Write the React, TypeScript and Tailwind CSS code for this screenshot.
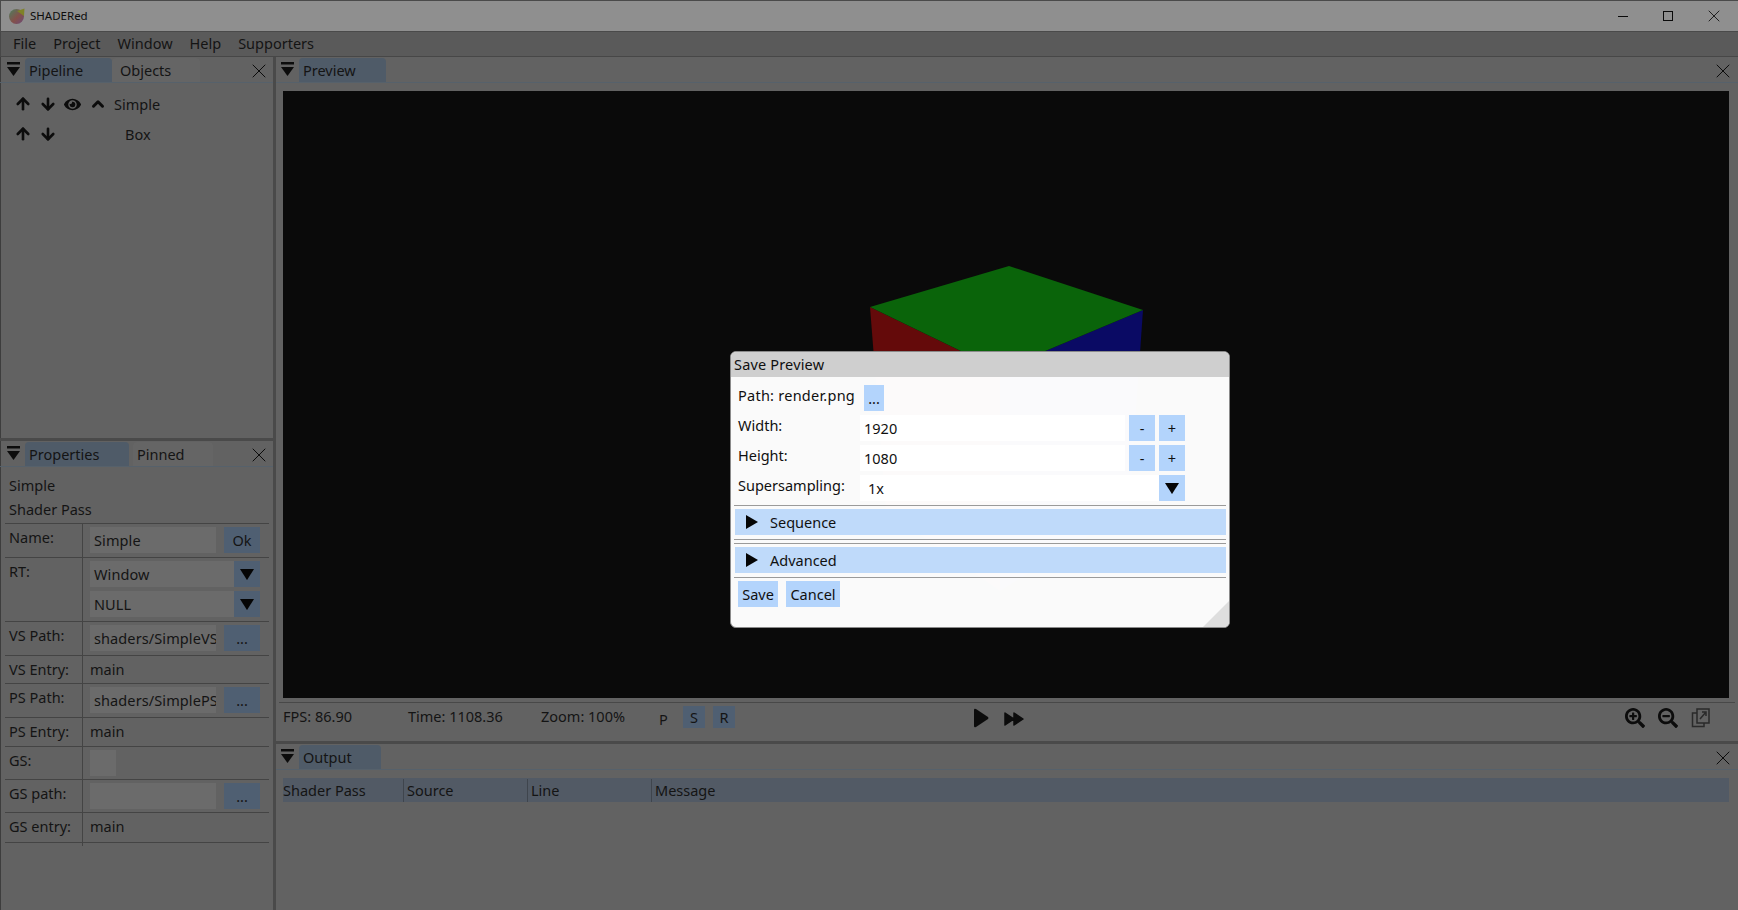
import { ArrowDown, ArrowUp, ChevronUp, X } from "lucide-react";
import { FaEye, FaSearchMinus, FaSearchPlus } from "react-icons/fa";
import type { ReactNode } from "react";

function Logo() {
  return (
    <svg width="16" height="16" viewBox="0 0 16 16">
      <defs>
        <linearGradient id="logoFill" x1="0" y1="0" x2="1" y2="1">
          <stop offset="0" stopColor="#4c7f5e" />
          <stop offset="0.55" stopColor="#84504a" />
          <stop offset="1" stopColor="#6a4b78" />
        </linearGradient>
      </defs>
      <circle cx="7.5" cy="8.5" r="7.5" fill="url(#logoFill)" />
      <path d="M8 3 L15.5 0.5 L15 8 Z" fill="#7f8228" />
    </svg>
  );
}

function PanelMenu() {
  return (
    <svg width="13" height="15" viewBox="0 0 13 15" className="shrink-0">
      <rect x="0" y="0" width="13" height="2.5" fill="#0c0c0c" />
      <path d="M0 5 H13 L6.5 14 Z" fill="#0c0c0c" />
    </svg>
  );
}

function Tab({ label, active, w }: { label: string; active?: boolean; w: string }) {
  return (
    <div className={`h-[24px] pl-[4px] pt-[1px] rounded-t-[4px] flex items-center ${w} ${active ? "bg-[#4f5b68]" : "bg-[#656565]"}`}>
      {label}
    </div>
  );
}

function TabBar({ children, pad = "pl-[7px] pr-[7px]" }: { children: ReactNode; pad?: string }) {
  return (
    <div className={`h-[26px] flex items-end border-b border-[#56616b] relative ${pad}`}>
      <div className="w-[18px] h-[25px] flex items-center"><PanelMenu /></div>
      {children}
      <X size={24} strokeWidth={1} className="ml-auto -mr-[5px] -mb-[1px] text-[#0c0c0c]" />
    </div>
  );
}

function Field({ text, w }: { text: string; w: string }) {
  return (
    <div className={`h-[26px] bg-[#6b6b6b] pl-[4px] pt-[1px] flex items-center overflow-hidden whitespace-nowrap tracking-[0.1px] ${w}`}>
      {text}
    </div>
  );
}

function DarkButton({ children, w = "w-[36px]" }: { children: ReactNode; w?: string }) {
  return (
    <div className={`h-[26px] bg-[#4f5f72] pt-[1px] flex items-center justify-center ${w}`}>{children}</div>
  );
}

function Caret({ size = 14 }: { size?: number }) {
  return (
    <svg width={size} height={size * 0.8} viewBox="0 0 14 11">
      <path d="M0 0 H14 L7 11 Z" fill="#050505" />
    </svg>
  );
}

function Combo({ text }: { text: string }) {
  return (
    <div className="flex w-[170px]">
      <Field text={text} w="flex-1" />
      <DarkButton w="w-[26px]"><Caret /></DarkButton>
    </div>
  );
}

function PropRow({ label, h, children }: { label: string; h: string; children?: ReactNode }) {
  return (
    <div className={`grid grid-cols-[78px_1fr] border-b border-[#444] ${h}`}>
      <div className="border-r border-[#444] pl-[4px] pt-[3px]">{label}</div>
      <div className="pl-[7px] pt-[3px] flex flex-col gap-[4px]">{children}</div>
    </div>
  );
}

function PathRow({ text }: { text: string }) {
  return (
    <div className="flex gap-[8px]">
      <Field text={text} w="w-[126px]" />
      <DarkButton>...</DarkButton>
    </div>
  );
}

function Pipeline() {
  const icon = "text-[#0c0c0c] w-[25px] flex justify-center";
  return (
    <div className="pl-[10px] pt-[9px] flex flex-col gap-[6px]">
      <div className="h-[24px] flex items-center">
        <span className={icon}><ArrowUp size={18} strokeWidth={3.5} /></span>
        <span className={icon}><ArrowDown size={18} strokeWidth={3.5} /></span>
        <span className={icon}><FaEye size={17} /></span>
        <span className={icon}><ChevronUp size={18} strokeWidth={4} /></span>
        <span className="ml-[4px] pt-[1px]">Simple</span>
      </div>
      <div className="h-[24px] flex items-center">
        <span className={icon}><ArrowUp size={18} strokeWidth={3.5} /></span>
        <span className={icon}><ArrowDown size={18} strokeWidth={3.5} /></span>
        <span className="ml-[65px] pt-[1px]">Box</span>
      </div>
    </div>
  );
}

function Properties() {
  return (
    <div>
      <div className="pl-[9px] pt-[6px] h-[56px] leading-[24px]">
        <div>Simple</div>
        <div>Shader Pass</div>
      </div>
      <div className="ml-[5px] w-[264px] border-t border-[#444]">
        <PropRow label="Name:" h="h-[34px]">
          <div className="flex gap-[8px]">
            <Field text="Simple" w="w-[126px]" />
            <DarkButton>Ok</DarkButton>
          </div>
        </PropRow>
        <PropRow label="RT:" h="h-[64px]">
          <Combo text="Window" />
          <Combo text="NULL" />
        </PropRow>
        <PropRow label="VS Path:" h="h-[34px]"><PathRow text="shaders/SimpleVS.glsl" /></PropRow>
        <PropRow label="VS Entry:" h="h-[28px]"><span className="-mt-[1px] leading-[22px]">main</span></PropRow>
        <PropRow label="PS Path:" h="h-[34px]"><PathRow text="shaders/SimplePS.glsl" /></PropRow>
        <PropRow label="PS Entry:" h="h-[29px]"><span className="-mt-[1px] leading-[22px]">main</span></PropRow>
        <PropRow label="GS:" h="h-[33px]"><div className="w-[26px] h-[26px] bg-[#6b6b6b]" /></PropRow>
        <PropRow label="GS path:" h="h-[33px]"><PathRow text="" /></PropRow>
        <PropRow label="GS entry:" h="h-[30px]"><span className="-mt-[1px] leading-[22px]">main</span></PropRow>
        <div className="h-[3px] w-[78px] border-r border-[#444]" />
      </div>
    </div>
  );
}

function Cube() {
  return (
    <svg viewBox="0 0 1446 607" className="block w-full h-full">
      <polygon points="587,216 717,279 717,500 603,420" fill="#640a0a" />
      <polygon points="860,219 717,279 717,500 846,420" fill="#0a0a64" />
      <polygon points="726,175 860,219 717,279 587,216" fill="#0a640a" />
    </svg>
  );
}

function StatusBar() {
  return (
    <div className="h-[39px] mt-[4px] ml-[3px] mr-[3px] border-t border-[#484848] flex pl-[4px] relative shrink-0">
      <span className="w-[125px] pt-[3px]">FPS: 86.90</span>
      <span className="w-[133px] pt-[3px]">Time: 1108.36</span>
      <span className="w-[118px] pt-[3px]">Zoom: 100%</span>
      <span className="w-[24px] pt-[6px]">P</span>
      <span className="mt-[3px] w-[22px] h-[22px] pt-[1px] bg-[#4f5f72] flex items-center justify-center">S</span>
      <span className="ml-[8px] mt-[3px] w-[22px] h-[22px] pt-[1px] bg-[#4f5f72] flex items-center justify-center">R</span>
      <div className="ml-[238px] mt-[5px] flex gap-[15px] text-[#0c0c0c]">
        <svg width="16" height="20" viewBox="0 0 16 20"><path d="M1 2 Q1 0 3 1 L15 9 Q16 10 15 11 L3 19 Q1 20 1 18 Z" fill="#0c0c0c" /></svg>
        <svg width="20" height="20" viewBox="0 0 20 20" className="mt-[1px]"><path d="M1 4 L10 10 L1 16 Z M10 4 L19 10 L10 16 Z" fill="#0c0c0c" stroke="#0c0c0c" strokeWidth="1.5" strokeLinejoin="round" /></svg>
      </div>
      <div className="ml-auto mr-[25px] mt-[5px] flex gap-[13px] text-[#0c0c0c]">
        <FaSearchPlus size={20} />
        <FaSearchMinus size={20} />
        <svg width="19" height="20" viewBox="0 0 19 20" fill="none" stroke="#2a2a2a" strokeWidth="1.5">
          <rect x="6" y="1" width="12" height="14" />
          <path d="M6 5 H1.5 V18.5 H13 V15" />
          <path d="M9 11 L15 4 M11 4 H15 V8" />
        </svg>
      </div>
    </div>
  );
}

function LightButton({ children, w }: { children: ReactNode; w: string }) {
  return <div className={`h-[26px] bg-[#b3d4fc] pt-[1px] flex items-center justify-center ${w}`}>{children}</div>;
}

function Section({ label }: { label: string }) {
  return (
    <div className="h-[26px] bg-[#bfdafa] flex items-center pl-[11px] gap-[12px] ml-[1px]">
      <svg width="12" height="14" viewBox="0 0 12 14"><path d="M0 0 L12 7 L0 14 Z" fill="#050505" /></svg>
      <span className="pt-[1px]">{label}</span>
    </div>
  );
}

function Rule() {
  return <div className="h-[1px] bg-[#9a9a9a]" />;
}

function SaveDialog() {
  return (
    <div className="absolute left-[730px] top-[351px] w-[500px] h-[277px] rounded-[6px] border border-[#8a8a8a] bg-white/98 overflow-hidden text-[#101010]">
      <div className="h-[25px] bg-[#cfcfcf] pl-[3px] flex items-center tracking-[0.17px]">Save Preview</div>
      <div className="px-[3px] pt-[8px] flex flex-col">
        <div className="flex h-[26px]">
          <span className="pl-[4px] w-[130px] tracking-[0.25px] whitespace-nowrap">Path: render.png</span>
          <LightButton w="w-[20px]">...</LightButton>
        </div>
        <div className="flex h-[26px] mt-[4px]">
          <span className="pl-[4px] w-[126px]">Width:</span>
          <div className="w-[265px] bg-white pl-[4px] pt-[1px] flex items-center">1920</div>
          <LightButton w="w-[26px] ml-[4px]">-</LightButton>
          <LightButton w="w-[26px] ml-[4px]">+</LightButton>
        </div>
        <div className="flex h-[26px] mt-[4px]">
          <span className="pl-[4px] w-[126px]">Height:</span>
          <div className="w-[265px] bg-white pl-[4px] pt-[1px] flex items-center">1080</div>
          <LightButton w="w-[26px] ml-[4px]">-</LightButton>
          <LightButton w="w-[26px] ml-[4px]">+</LightButton>
        </div>
        <div className="flex h-[26px] mt-[4px]">
          <span className="pl-[4px] w-[126px]">Supersampling:</span>
          <div className="w-[299px] bg-white pl-[8px] pt-[1px] flex items-center">1x</div>
          <LightButton w="w-[26px]"><Caret /></LightButton>
        </div>
        <div className="mt-[4px]"><Rule /></div>
        <div className="mt-[3px]"><Section label="Sequence" /></div>
        <div className="mt-[4px]"><Rule /></div>
        <div className="mt-[3px]"><Rule /></div>
        <div className="mt-[3px]"><Section label="Advanced" /></div>
        <div className="mt-[4px]"><Rule /></div>
        <div className="mt-[3px] pl-[4px] flex gap-[8px]">
          <LightButton w="w-[40px]">Save</LightButton>
          <LightButton w="w-[54px]">Cancel</LightButton>
        </div>
      </div>
      <div className="absolute right-0 bottom-0 w-[26px] h-[26px] bg-[#dedede] [clip-path:polygon(100%_0,100%_100%,0_100%)]" />
    </div>
  );
}

export default function App() {
  const rightPad = "pl-[5px] pr-[8px]";
  return (
    <div className="relative w-screen h-screen overflow-hidden flex flex-col bg-[#626262] text-[#141414] text-[14.5px] font-['Noto_Sans',sans-serif]">
      <div className="h-[32px] shrink-0 bg-[#8f8f8f] border-t border-b border-l border-[#4a4a4a] flex items-center pl-[8px] gap-[5px] text-[11.5px] text-[#0c0c0c]">
        <Logo />
        <span>SHADERed</span>
        <div className="ml-auto flex items-center text-[#0a0a0a]">
          <div className="w-[10px] h-[1px] bg-[#0a0a0a] mr-[35px]" />
          <div className="w-[10px] h-[10px] border border-[#0a0a0a] mr-[31px]" />
          <X size={20} strokeWidth={1} className="mr-[14px]" />
        </div>
      </div>
      <div className="h-[25px] shrink-0 bg-[#5a5a5a] border-b border-l border-[#474747] flex items-center pl-[12px] gap-[17px]">
        <span>File</span>
        <span>Project</span>
        <span>Window</span>
        <span>Help</span>
        <span>Supporters</span>
      </div>
      <div className="flex flex-1 min-h-0">
        <div className="w-[273px] shrink-0 border-r-[3px] border-[#4a4a4a] flex flex-col box-content shadow-[inset_1px_0_0_#3d3d3d]">
          <div className="h-[381px] border-b-[3px] border-[#4a4a4a] box-content">
            <TabBar>
              <Tab label="Pipeline" active w="w-[87px]" />
              <Tab label="Objects" w="w-[88px] pl-[8px]" />
            </TabBar>
            <Pipeline />
          </div>
          <TabBar>
            <Tab label="Properties" active w="w-[104px]" />
            <div className="w-[4px]" />
            <Tab label="Pinned" w="w-[80px]" />
          </TabBar>
          <Properties />
        </div>
        <div className="flex-1 min-w-0 flex flex-col">
          <TabBar pad={rightPad}>
            <Tab label="Preview" active w="w-[87px]" />
          </TabBar>
          <div className="h-[607px] mt-[8px] ml-[7px] mr-[9px] bg-[#0a0a0a] shrink-0"><Cube /></div>
          <StatusBar />
          <div className="border-t-[3px] border-[#4a4a4a] flex-1">
            <TabBar pad={rightPad}>
              <Tab label="Output" active w="w-[82px]" />
            </TabBar>
            <div className="mt-[8px] ml-[7px] mr-[9px] h-[24px] pt-[1px] bg-[#525a65] grid grid-cols-[120px_124px_124px_1fr] items-center">
              <span>Shader Pass</span>
              <span className="border-l border-[#3f454d] pl-[3px] h-full flex items-center">Source</span>
              <span className="border-l border-[#3f454d] pl-[3px] h-full flex items-center">Line</span>
              <span className="border-l border-[#3f454d] pl-[3px] h-full flex items-center">Message</span>
            </div>
          </div>
        </div>
      </div>
      <SaveDialog />
    </div>
  );
}
